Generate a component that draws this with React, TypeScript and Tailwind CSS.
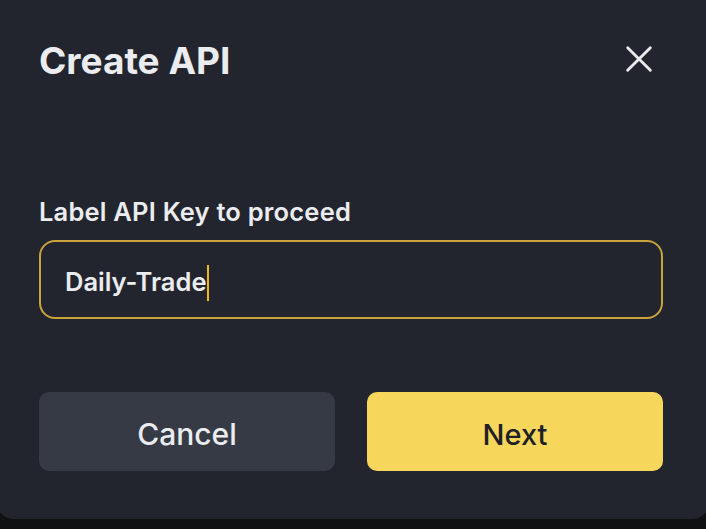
import { useState } from "react";

// Create API dialog: label the key, then continue
export default function App() {
  const [label] = useState("Daily-Trade");

  return (
    <div
      className="w-[706px] h-[529px] overflow-hidden bg-[#101113]"
      style={{ fontFamily: "Inter, 'Open Sans', sans-serif" }}
    >
      <div className="-ml-[4px] -mt-[10px] w-[714px] h-[529px] rounded-[18px] bg-[#22252d] pl-[43px] pr-[47px] pt-[8px]">
        {/* header */}
        <div className="flex items-center justify-between h-[126px]">
          <h1 className="text-[37px] font-bold text-[#eaecef]">Create API</h1>
          <button className="w-[40px] h-[40px] mr-[4px] -mt-[4px] flex items-center justify-center text-[#eaecef]">
            <svg width="34" height="34" viewBox="0 0 24 24" fill="none" stroke="currentColor" strokeWidth="2" strokeLinecap="round">
              <path d="M4 4l16 16M20 4L4 20" />
            </svg>
          </button>
        </div>

        {/* label input */}
        <div className="mt-[72px]">
          <label className="block text-[25.5px] font-semibold text-[#eaecef] leading-[32px] tracking-[0.2px]">
            Label API Key to proceed
          </label>
          <div className="mt-[12px] h-[79px] rounded-[16px] border-[2px] border-[#c8a43a] flex items-center px-[24px] pt-[6px]">
            <span className="text-[25.5px] font-semibold text-[#eaecef]">{label}</span>
            <span className="ml-[1px] w-[2px] h-[36px] bg-[#f0b90b]" />
          </div>
        </div>

        {/* actions */}
        <div className="mt-[73px] grid grid-cols-2 gap-[32px]">
          <button className="h-[79px] rounded-[10px] bg-[#363a45] pt-[6px] text-[30px] font-medium text-[#eaecef]">
            Cancel
          </button>
          <button className="h-[79px] rounded-[10px] bg-[#f6d65b] pt-[6px] text-[29px] font-medium text-[#1e2026]">
            Next
          </button>
        </div>
      </div>
    </div>
  );
}
